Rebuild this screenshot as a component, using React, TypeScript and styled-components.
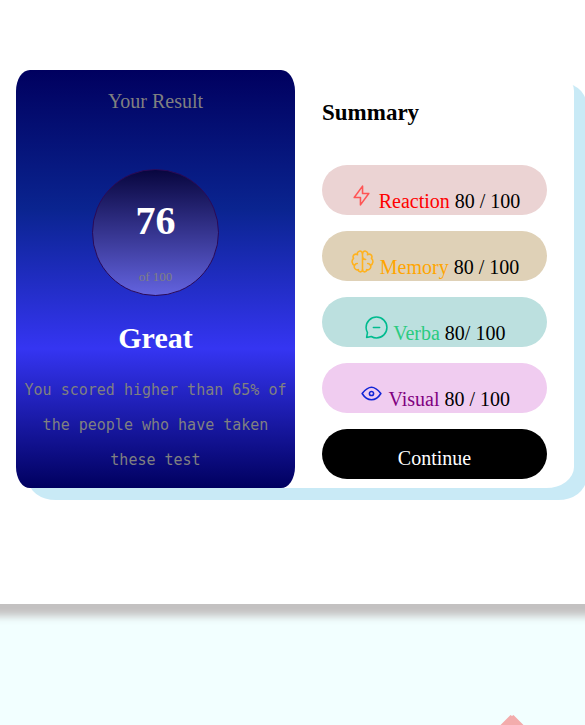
import React from "react";
import styled, { createGlobalStyle } from "styled-components";

const GlobalStyle = createGlobalStyle`
  * { box-sizing: border-box; }
  body {
    margin: 0;
    background: #f2ffff;
    font-family: "Liberation Serif", "Times New Roman", serif;
    font-size: 20px;
    line-height: 24px;
    color: #000;
  }
  h1, h2, h3, p, ul { margin: 0; padding: 0; }
`;

const Page = styled.div`
  min-height: 100vh;
  overflow: hidden;
  display: flex;
  flex-direction: column;
`;

const Stage = styled.main`
  padding: 70px 11px 116px 16px;
  background: #fff;
  box-shadow: 0 2px 8px 10px #c3c1c1;
`;

const Card = styled.section`
  display: grid;
  grid-template-columns: 1fr 1fr;
  border-radius: 5%;
  background: #fff;
  box-shadow: 12px 12px #c9eaf6;
`;

const ResultPanel = styled.div`
  display: flex;
  flex-direction: column;
  align-items: center;
  padding: 19px 8px 10px;
  border-radius: 5%;
  text-align: center;
  background: linear-gradient(#00005f, #0a2490, #3535f2, #00005f);
`;

const ResultTitle = styled.h2`
  font-size: 20px;
  font-weight: 400;
  color: gray;
`;

const ScoreCircle = styled.div`
  width: 127px;
  height: 127px;
  margin-top: 56px;
  padding-top: 28px;
  border: 1px solid #2b0a57;
  border-radius: 50%;
  background: linear-gradient(#08063f, #6363df);
`;

const Score = styled.p`
  font-size: 40px;
  font-weight: 700;
  line-height: 46px;
  color: #fff;
`;

const ScoreTotal = styled.p`
  margin-top: 25px;
  font-size: 13px;
  line-height: 16px;
  color: gray;
`;

const Grade = styled.h3`
  margin-top: 25px;
  font-size: 30px;
  line-height: 34px;
  color: #fff;
`;

const Remark = styled.p`
  margin-top: 18px;
  font-family: "DejaVu Sans Mono", monospace;
  font-size: 15px;
  line-height: 35px;
  color: gray;
`;

const SummaryPanel = styled.div`
  padding: 30px 27px 9px;
`;

const SummaryTitle = styled.h1`
  font-size: 23px;
  line-height: 26px;
`;

const Scores = styled.ul`
  display: grid;
  gap: 16px;
  margin: 39px 0 16px;
  list-style: none;
`;

const Pill = styled.li<{ $tint: string }>`
  padding: 18px 0 2px;
  border-radius: 25px;
  text-align: center;
  white-space: nowrap;
  background: ${(p) => p.$tint};
`;

const PillLabel = styled.span<{ $color: string }>`
  color: ${(p) => p.$color};
`;

const Icon = styled.svg`
  width: 25px;
  height: 25px;
  fill: none;
  stroke-width: 1.25px;
  stroke-linecap: round;
  stroke-linejoin: round;
  vertical-align: baseline;
`;

const ContinueButton = styled.button`
  display: block;
  width: 100%;
  height: 50px;
  padding: 8px 0 0;
  border: 0;
  border-radius: 25px;
  font: inherit;
  color: #fff;
  background: #000;
  cursor: pointer;
`;

const Below = styled.section`
  display: flex;
  justify-content: flex-end;
  padding: 110px 61px 0 0;
`;

const Diamond = styled.svg`
  display: block;
  width: 24px;
  height: 11px;
`;

const scores = [
  {
    name: "Reaction",
    value: "80 / 100",
    tint: "#ebd3d3",
    color: "red",
    stroke: "#ff5555",
    paths: ["M10.833 8.333V2.5l-6.666 9.167h5V17.5l6.666-9.167h-5Z"],
  },
  {
    name: "Memory",
    value: "80 / 100",
    tint: "#dfd1b7",
    color: "orange",
    stroke: "#ffb21e",
    paths: [
      "M5.833 11.667a2.5 2.5 0 1 0 .834 4.858",
      "M3.553 13.004a3.333 3.333 0 0 1-.728-5.53m.025-.067a2.083 2.083 0 0 1 2.983-2.824m.199.054A2.083 2.083 0 1 1 10 3.75v12.917a1.667 1.667 0 0 1-3.333 0M10 5.833a2.5 2.5 0 0 0 2.5 2.5m1.667 3.334a2.5 2.5 0 1 1-.834 4.858",
      "M16.447 13.004a3.334 3.334 0 0 0 .728-5.53m-.025-.067a2.083 2.083 0 0 0-2.983-2.824M10 3.75a2.085 2.085 0 0 1 2.538-2.033 2.084 2.084 0 0 1 1.43 2.92m-.635 12.03a1.667 1.667 0 0 1-3.333 0",
    ],
  },
  {
    name: "Verba",
    value: "80/ 100",
    tint: "#bce0df",
    color: "#2acb80",
    stroke: "#00bb8f",
    paths: [
      "M7.5 10h5M10 18.333A8.333 8.333 0 1 0 1.667 10c0 1.518.406 2.942 1.115 4.167l-.699 3.75 3.75-.699A8.295 8.295 0 0 0 10 18.333Z",
    ],
  },
  {
    name: "Visual",
    value: "80 / 100",
    tint: "#f0ccf0",
    color: "purple",
    stroke: "#1125d6",
    paths: [
      "M10 11.667a1.667 1.667 0 1 0 0-3.334 1.667 1.667 0 0 0 0 3.334Z",
      "M17.5 10c-1.574 2.492-4.402 5-7.5 5s-5.926-2.508-7.5-5C4.416 7.632 6.66 5 10 5s5.584 2.632 7.5 5Z",
    ],
  },
];

export default function App() {
  return (
    <Page>
      <GlobalStyle />
      <Stage>
        <Card>
          <ResultPanel>
            <ResultTitle>Your Result</ResultTitle>
            <ScoreCircle>
              <Score>76</Score>
              <ScoreTotal>of 100</ScoreTotal>
            </ScoreCircle>
            <Grade>Great</Grade>
            <Remark>
              You scored higher than 65% of the people who have taken these test
            </Remark>
          </ResultPanel>
          <SummaryPanel>
            <SummaryTitle>Summary</SummaryTitle>
            <Scores>
              {scores.map((s) => (
                <Pill key={s.name} $tint={s.tint}>
                  <Icon viewBox="0 0 20 20" stroke={s.stroke} aria-hidden="true">
                    {s.paths.map((d) => (
                      <path key={d} d={d} />
                    ))}
                  </Icon>{" "}
                  <PillLabel $color={s.color}>{s.name}</PillLabel> {s.value}
                </Pill>
              ))}
            </Scores>
            <ContinueButton type="button">Continue</ContinueButton>
          </SummaryPanel>
        </Card>
      </Stage>
      <Below>
        <Diamond viewBox="0 0 24 11" aria-hidden="true">
          <path d="M0 11.5 10.5 1 12 2 13.5 1 24 11.5Z" fill="#f3acac" />
        </Diamond>
      </Below>
    </Page>
  );
}
